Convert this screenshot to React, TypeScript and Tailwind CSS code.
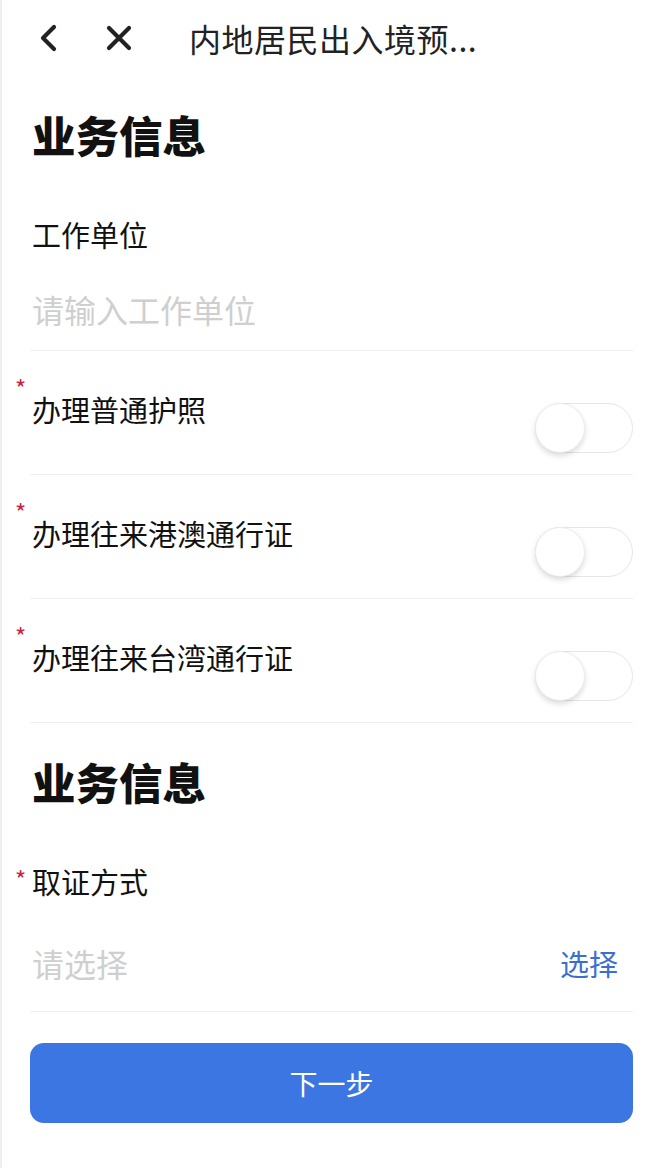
import React from "react";

const font = { fontFamily: '"Noto Sans CJK SC", "Noto Sans", sans-serif' };

function Toggle() {
  return (
    <div className="relative h-[50px] w-[98px] rounded-full border border-[#e6e6e6] bg-white">
      <div className="absolute left-0 top-0 h-[48px] w-[48px] rounded-full bg-white shadow-[0_3px_6px_rgba(0,0,0,0.18)] ring-1 ring-[#ececec]" />
    </div>
  );
}

function Required({ children, top = "-top-[15px]" }: { children: React.ReactNode; top?: string }) {
  return (
    <div className="relative text-[29px] leading-[40px] text-[#111]">
      <span className={`absolute -left-[17px] ${top} text-[24px] leading-[28px] text-[#c8243f]`}>*</span>
      {children}
    </div>
  );
}

function SwitchRow({ label }: { label: string }) {
  return (
    <div className="flex h-[124px] items-start justify-between border-b border-[#efefef]">
      <div className="mt-[38px] pl-[2px]">
        <Required>{label}</Required>
      </div>
      <div className="mt-[52px]">
        <Toggle />
      </div>
    </div>
  );
}

export default function App() {
  return (
    <div style={font} className="h-[1168px] w-[662px] border-l-2 border-[#efefef] bg-white">
      {/* 顶部 */}
      <header className="flex h-[76px] items-center pl-[34px]">
        <svg width="24" height="30" viewBox="0 0 24 30" className="text-[#222]">
          <path d="M18 4 L7 15 L18 26" fill="none" stroke="currentColor" strokeWidth="4.2" strokeLinecap="round" strokeLinejoin="round" />
        </svg>
        <svg width="28" height="28" viewBox="0 0 28 28" className="ml-[45px] text-[#222]">
          <path d="M4 4 L24 24 M24 4 L4 24" fill="none" stroke="currentColor" strokeWidth="4.2" strokeLinecap="round" />
        </svg>
        <span className="ml-[56px] text-[32px] leading-[40px] tracking-[0.5px] text-[#222]">内地居民出入境预...</span>
      </header>

      <main className="px-[28px] pr-[29px]">
        <h2 className="mt-[35px] pl-[2px] text-[43.5px] font-black leading-[48px] text-[#111]">业务信息</h2>

        <div className="mt-[55px] pl-[2px] text-[29px] leading-[40px] text-[#111]">工作单位</div>
        <div className="mt-[33px] border-b border-[#efefef] pb-[19px] pl-[2px] text-[32px] leading-[44px] text-[#cfcfcf]">
          请输入工作单位
        </div>

        <SwitchRow label="办理普通护照" />
        <SwitchRow label="办理往来港澳通行证" />
        <SwitchRow label="办理往来台湾通行证" />

        <h2 className="mt-[35px] pl-[2px] text-[43.5px] font-black leading-[48px] text-[#111]">业务信息</h2>

        <div className="mt-[55px] pl-[2px]">
          <Required top="top-[4px]">取证方式</Required>
        </div>
        <div className="mt-[40px] flex items-center justify-between border-b border-[#efefef] pb-[26px] pl-[2px] pr-[15px]">
          <span className="text-[32px] leading-[44px] text-[#cfcfcf]">请选择</span>
          <span className="text-[29px] leading-[44px] text-[#3b6fcf]">选择</span>
        </div>

        <button className="mt-[31px] flex h-[80px] w-full items-center justify-center rounded-[14px] bg-[#3b76e2] text-[28px] text-white">
          下一步
        </button>
      </main>
    </div>
  );
}
